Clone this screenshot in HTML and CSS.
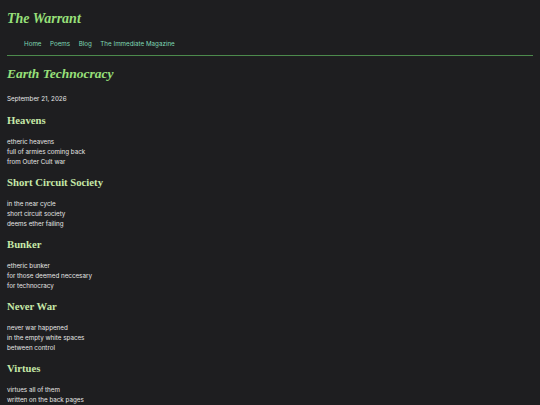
FILE: index.html
```html
<!DOCTYPE html>
<html>
<head>
<meta charset="utf-8">
<link rel="stylesheet" href="styles.css">
</head>
<body>
<header class="site-header">
  <div class="site-title">The Warrant</div>
  <nav class="nav">
    <a href="#">Home</a>
    <a href="#">Poems</a>
    <a href="#">Blog</a>
    <a href="#">The Immediate Magazine</a>
  </nav>
</header>
<main class="content">
  <h1 class="page-title">Earth Technocracy</h1>
  <p class="date">September 21, 2026</p>
  <section class="poem">
    <h2>Heavens</h2>
    <p>etheric heavens<br>full of armies coming back<br>from Outer Cult war</p>
  </section>
  <section class="poem">
    <h2>Short Circuit Society</h2>
    <p>in the near cycle<br>short circuit society<br>deems ether failing</p>
  </section>
  <section class="poem">
    <h2>Bunker</h2>
    <p>etheric bunker<br>for those deemed neccesary<br>for technocracy</p>
  </section>
  <section class="poem">
    <h2>Never War</h2>
    <p>never war happened<br>in the empty white spaces<br>between control</p>
  </section>
  <section class="poem">
    <h2>Virtues</h2>
    <p>virtues all of them<br>written on the back pages</p>
  </section>
</main>
</body>
</html>
```
FILE: styles.css
```css
html, body {
  margin: 0;
  padding: 0;
  background: #1e1e20;
}
body {
  padding: 0 7px;
  font-family: Inter, "Liberation Sans", sans-serif;
  font-size: 6.25px;
  line-height: 10px;
  color: #e6e6e6;
}
.site-header {
  border-bottom: 1px solid #4c8a4c;
}
.site-title {
  font-family: "Liberation Serif", serif;
  font-style: italic;
  font-weight: bold;
  font-size: 14px;
  line-height: 20px;
  color: #98e07a;
  padding-top: 9px;
}
.nav {
  display: flex;
  gap: 8.5px;
  padding: 10px 0 6px 17px;
}
.nav a {
  color: #7fd8b4;
  text-decoration: none;
}
.page-title {
  font-family: "Liberation Serif", serif;
  font-style: italic;
  font-weight: bold;
  font-size: 13.5px;
  line-height: 20px;
  color: #98e07a;
  margin: 8px 0 0;
}
.date {
  margin: 10px 0 0;
}
.poem h2 {
  font-family: "Liberation Serif", serif;
  font-weight: bold;
  font-size: 10.7px;
  line-height: 16px;
  color: #c6e8a8;
  margin: 7px 0 0;
}
.date + .poem h2 {
  margin-top: 8px;
}
.poem p {
  margin: 9px 0 0;
}
```
